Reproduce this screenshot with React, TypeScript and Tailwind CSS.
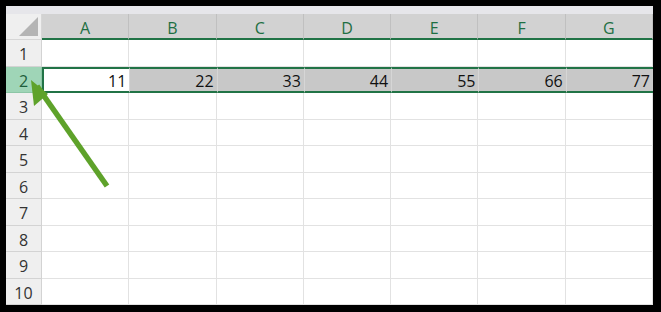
import { Fragment } from "react";

const cols = ["A", "B", "C", "D", "E", "F", "G"];
const rowTwo = ["11", "22", "33", "44", "55", "66", "77"];
const rows = [1, 2, 3, 4, 5, 6, 7, 8, 9, 10];

const App = () => {
  return (
    <div className="w-[661px] h-[312px] bg-black pl-[6px] pt-[6px] pr-[8px] pb-[7px] font-['Open_Sans',sans-serif] leading-none">
      <div className="relative w-full h-full bg-white flex flex-col overflow-hidden">
        <div className="h-[8px] shrink-0 bg-[#e6e6ea]" />
        <div className="grid grid-cols-[36px_repeat(7,1fr)] grid-rows-[26px_repeat(10,26.5px)]">
          {/* corner */}
          <div className="relative bg-[#efefef] border-r border-b border-[#d6d6d6]">
            <div className="absolute right-[3px] bottom-[3px] w-0 h-0 border-l-[19px] border-l-transparent border-b-[19px] border-b-[#b4b4b4]" />
          </div>
          {cols.map((c) => (
            <div
              key={c}
              className="bg-[#d2d2d2] border-r border-[#c0c0c0] border-b-2 border-b-[#217346] flex items-center justify-center pt-[4px] text-[16px] text-[#1e6f43]"
            >
              {c}
            </div>
          ))}
          {rows.map((r) => {
            const sel = r === 2;
            return (
              <Fragment key={r}>
                <div
                  className={
                    sel
                      ? "bg-[#9fd5b7] border-r border-b border-[#8cc6a6] flex items-center justify-center pt-[3px] text-[16px] text-[#1d5e3b]"
                      : "bg-[#efefef] border-r border-b border-[#d3d3d3] flex items-center justify-center pt-[3px] text-[16px] text-[#333333]"
                  }
                >
                  {r}
                </div>
                {cols.map((c, i) =>
                  sel ? (
                    <div
                      key={c}
                      className={
                        i === 0
                          ? "bg-white border-y-2 border-l-2 border-[#217346] flex items-center justify-end pr-[3px] pt-[2px] text-[16px] text-[#111111]"
                          : "bg-[#c8c8c8] border-y-2 border-[#217346] border-l border-l-[#d6d6d6] flex items-center justify-end pr-[3px] pt-[2px] text-[16px] text-[#111111]"
                      }
                    >
                      {rowTwo[i]}
                    </div>
                  ) : (
                    <div
                      key={c}
                      className="border-r border-b border-[#e2e2e2]"
                    />
                  )
                )}
              </Fragment>
            );
          })}
        </div>
        <svg
          className="absolute left-0 top-0 pointer-events-none"
          width="647"
          height="299"
          viewBox="0 0 647 299"
        >
          <line
            x1="101"
            y1="180"
            x2="31"
            y2="80"
            stroke="#5ea22a"
            strokeWidth="5.5"
          />
          <polygon points="25,74 28,100 42,88" fill="#5ea22a" />
        </svg>
      </div>
    </div>
  );
};

export default App;
